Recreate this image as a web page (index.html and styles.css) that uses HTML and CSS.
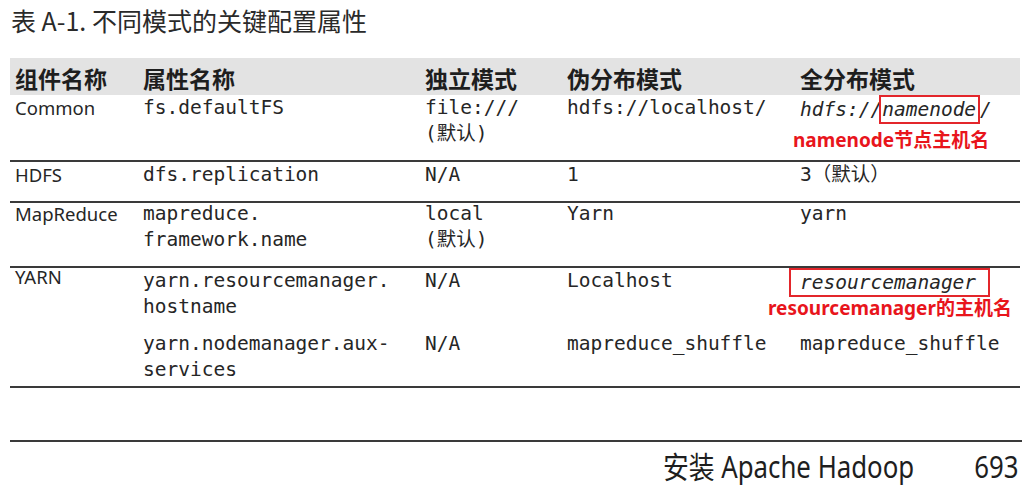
FILE: index.html
```html
<!DOCTYPE html>
<html lang="zh">
<head>
<meta charset="utf-8">
<link rel="stylesheet" href="styles.css">
</head>
<body>
<div class="page">
  <h1 class="title">表 A-1. 不同模式的关键配置属性</h1>
  <div class="table">
    <div class="row head">
      <div class="c c1">组件名称</div>
      <div class="c">属性名称</div>
      <div class="c">独立模式</div>
      <div class="c">伪分布模式</div>
      <div class="c">全分布模式</div>
    </div>
    <div class="row r1">
      <div class="c c1 sans">Common</div>
      <div class="c mono">fs.defaultFS</div>
      <div class="c mono">file:///<br>(默认)</div>
      <div class="c mono">hdfs://localhost/</div>
      <div class="c mono"><i>hdfs://<span class="box box1">namenode</span>/</i><div class="note note1">namenode节点主机名</div></div>
    </div>
    <div class="row r2 ruled">
      <div class="c c1 sans">HDFS</div>
      <div class="c mono">dfs.replication</div>
      <div class="c mono">N/A</div>
      <div class="c mono">1</div>
      <div class="c mono">3（默认）</div>
    </div>
    <div class="row r3 ruled">
      <div class="c c1 sans">MapReduce</div>
      <div class="c mono">mapreduce.<br>framework.name</div>
      <div class="c mono">local<br>(默认)</div>
      <div class="c mono">Yarn</div>
      <div class="c mono">yarn</div>
    </div>
    <div class="row r4 ruled">
      <div class="c c1 sans yarn">YARN</div>
      <div class="c mono">yarn.resourcemanager.<br>hostname</div>
      <div class="c mono">N/A</div>
      <div class="c mono">Localhost</div>
      <div class="c mono"><span class="box box2"><i>resourcemanager</i></span><div class="note note2">resourcemanager的主机名</div></div>
    </div>
    <div class="row r5">
      <div class="c c1"></div>
      <div class="c mono">yarn.nodemanager.aux-<br>services</div>
      <div class="c mono">N/A</div>
      <div class="c mono">mapreduce_shuffle</div>
      <div class="c mono">mapreduce_shuffle</div>
    </div>
  </div>
  <div class="footer">
    <span class="chapter">安装 Apache Hadoop</span>
    <span class="pageno">693</span>
  </div>
</div>
</body>
</html>
```

FILE: styles.css
```css
html, body {
  margin: 0;
  padding: 0;
  background: #ffffff;
}
.page {
  width: 1034px;
  height: 488px;
  overflow: hidden;
  color: #262626;
  font-family: "Noto Sans", "Noto Sans CJK SC", sans-serif;
}
.title {
  margin: 0;
  padding: 4px 0 0 11px;
  height: 51px;
  box-sizing: border-box;
  font-family: "Noto Sans CJK SC", sans-serif;
  font-weight: 400;
  font-size: 25px;
  line-height: 32px;
  color: #2a2a2a;
}
.table {
  margin-left: 10px;
  width: 1010px;
}
.row {
  display: grid;
  grid-template-columns: 133px 282px 142px 233px 1fr;
}
.c1 { padding-left: 5px; }
.head {
  margin-top: 7px;
  height: 37px;
  background: #e3e3e3;
  font-family: "Noto Sans CJK SC", sans-serif;
  font-weight: 700;
  font-size: 23px;
  line-height: 40px;
  color: #1e1e1e;
}
.mono {
  font-family: "DejaVu Sans Mono", "Noto Sans CJK SC", monospace;
  font-size: 19.5px;
  line-height: 26px;
}
.sans {
  font-family: "Noto Sans", sans-serif;
  font-size: 18.5px;
  line-height: 26px;
}
.ruled { border-top: 2px solid #3a3a3a; }
.r1 { height: 65px; }
.r2 { height: 41px; box-sizing: border-box; }
.r3 { height: 65px; box-sizing: border-box; }
.r3 > .c { margin-top: -2px; }
.r4 { height: 65px; box-sizing: border-box; }
.yarn { margin-top: -4px; }
.r5 { height: 57px; box-sizing: border-box; border-bottom: 2px solid #3a3a3a; }
.box {
  display: inline-block;
  border: 2px solid #e3262b;
  line-height: 25px;
}
.box1 {
  padding: 0 2px 0 1px;
  margin-left: -3px;
}
.box2 {
  margin-left: -11px;
  padding: 0 12px 0 9px;
  font-style: normal;
}
.note {
  font-family: "Noto Sans", "Noto Sans CJK SC", sans-serif;
  font-weight: 700;
  font-size: 19px;
  line-height: 22px;
  color: #e8151c;
}
.note1 { margin: 5px 0 0 -7px; }
.note2 { margin: 0 0 0 -32px; }
.footer {
  margin: 52px 0 0 10px;
  width: 1012px;
  border-top: 2px solid #3a3a3a;
  display: flex;
  justify-content: flex-end;
  gap: 52px;
  padding-right: 4px;
  box-sizing: border-box;
  font-family: "Noto Sans", "Noto Sans CJK SC", sans-serif;
  font-size: 30px;
  line-height: 50px;
  color: #1e1e1e;
}
.chapter,
.pageno {
  display: inline-block;
  transform: scaleX(0.86);
  transform-origin: right center;
}
```
